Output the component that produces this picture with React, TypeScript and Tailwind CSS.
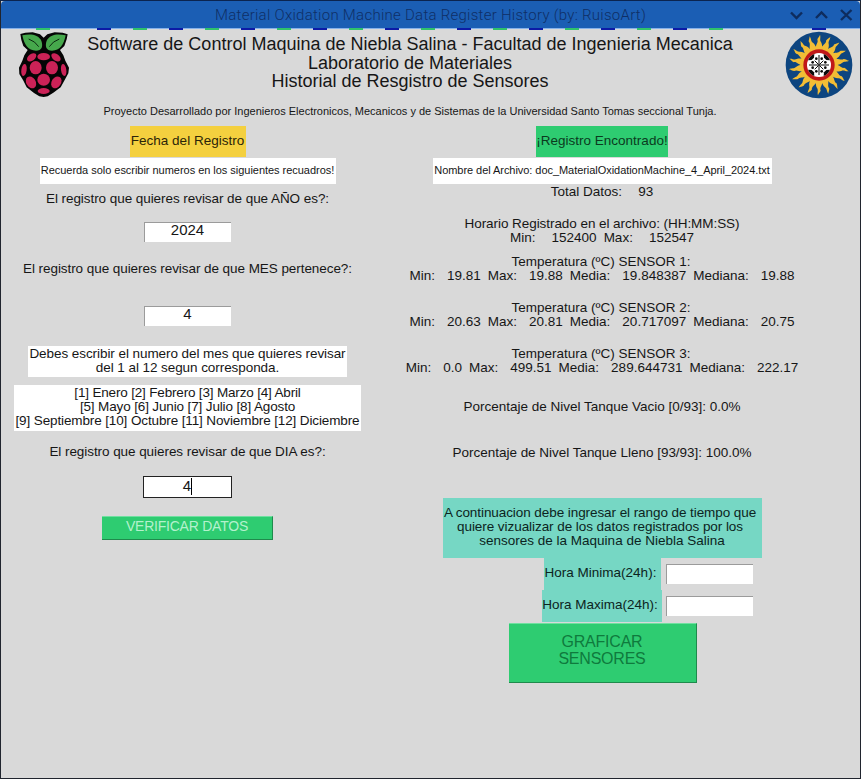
import type { ReactNode } from "react";

const dashes = Array.from({ length: 18 }, (_, i) => i);

function RaspberryLogo() {
  return (
    <svg viewBox="54 96 156 198" className="h-[66px] w-[52px]">
      <path
        d="M61 102 L76 98 L98 97 L120 103 L131 113 L142 103 L164 97 L188 98 L203 103 L200 118 L193 138 L180 150 L190 166 L196 182 L207 203 L205 220 L194 240 L182 262 L160 278 L143 289 L131 291 L118 289 L102 279 L80 262 L69 240 L58 222 L57 203 L67 182 L73 166 L83 150 L70 138 L64 120 Z"
        fill="#050505"
      />
      <g fill="#46a84c">
        <path d="M67 106 C90 100 115 103 124 122 C130 139 125 152 108 152 C84 151 73 135 67 106Z" />
        <path d="M197 106 C174 100 149 103 140 122 C134 139 139 152 156 152 C180 151 191 135 197 106Z" />
      </g>
      <path d="M86 117 Q106 124 116 140 M178 117 Q158 124 148 140" stroke="#0b2a10" strokeWidth="3" fill="none" />
      <g fill="#cb2257">
        <ellipse cx="131" cy="170" rx="19" ry="11" />
        <ellipse cx="95" cy="172" rx="16" ry="10" transform="rotate(-38 95 172)" />
        <ellipse cx="168" cy="172" rx="16" ry="10" transform="rotate(38 168 172)" />
        <ellipse cx="107" cy="203" rx="18" ry="20" />
        <ellipse cx="156" cy="203" rx="18" ry="20" />
        <ellipse cx="72" cy="210" rx="8" ry="18" transform="rotate(8 72 210)" />
        <ellipse cx="191" cy="210" rx="8" ry="18" transform="rotate(-8 191 210)" />
        <ellipse cx="131" cy="239" rx="19" ry="18" />
        <ellipse cx="93" cy="247" rx="14" ry="19" transform="rotate(-32 93 247)" />
        <ellipse cx="169" cy="247" rx="14" ry="19" transform="rotate(32 169 247)" />
        <ellipse cx="131" cy="273" rx="18" ry="9" />
      </g>
    </svg>
  );
}

function UniversitySeal() {
  const rays = Array.from({ length: 18 }, (_, i) => i * 20);
  const quarters = [0, 90, 180, 270];
  return (
    <svg viewBox="-102 -102 204 204" className="h-[68px] w-[68px]">
      <circle r="100" fill="#0d4580" />
      <g fill="#f2bd35">
        <circle r="56" />
        {rays.map((a) => (
          <path key={a} d="M-10 -50 C-10 -62 -1 -68 -5 -76 C-4 -82 2 -86 3 -91 C6 -82 1 -76 6 -69 C10 -62 9 -56 10 -50Z" transform={`rotate(${a})`} />
        ))}
      </g>
      <circle r="47" fill="#c01818" />
      <circle r="36" fill="#fff" />
      <g fill="#0c0c0c">
        {quarters.map((a) => (
          <g key={a} transform={`rotate(${a})`}>
            <path d="M14 -33 A36 36 0 0 1 33 -14 L22 -15 L15 -22 Z" />
            <circle cx="8" cy="-19" r="4" />
            <circle cx="19" cy="-8" r="4" />
            <path d="M-1.5 -30 L1.5 -30 L1.5 0 L-1.5 0 Z" />
            <path d="M2 -2 L13 -13" stroke="#0c0c0c" strokeWidth="3" />
          </g>
        ))}
      </g>
    </svg>
  );
}

function Readings({ items, wide }: { items: [string, string][]; wide?: boolean }) {
  return (
    <div className="flex justify-center gap-[7px]">
      {items.map(([label, value]) => (
        <div key={label} className={wide ? "flex gap-4" : "flex gap-3"}>
          <span>{label}</span>
          <span>{value}</span>
        </div>
      ))}
    </div>
  );
}

function Sensor({ n, items }: { n: number; items: [string, string][] }) {
  return (
    <div className="mb-[18px] h-7">
      <div className="pr-[2px]">Temperatura (ºC) SENSOR {n}:</div>
      <Readings items={items} />
    </div>
  );
}

function Entry({ children }: { children?: ReactNode }) {
  return (
    <div className="h-5 w-[87px] border-t border-l border-[#9b9b9b] bg-white pr-px text-center text-[15px] leading-[13px]">
      {children}
    </div>
  );
}

export default function App() {
  return (
    <div className="flex h-[779px] w-[861px] flex-col overflow-hidden border border-[#20242e] border-t-[#0b2450] bg-[#d9d9d9] font-['Liberation_Sans',Arial,sans-serif] text-[13.5px] leading-[14px] text-[#161616]">
      <div className="flex h-[27px] shrink-0 items-center rounded-t-sm bg-[#1b5eb4]">
        <div className="w-[214px]" />
        <div className="flex-1 whitespace-pre font-[Roboto,sans-serif] text-[15px] leading-[18px] font-light tracking-[0.265px] text-[#0f2f66]">
          Material Oxidation Machine Data Register History (by: RuisoArt)
        </div>
        <svg viewBox="0 0 70 16" className="mr-[4px] h-4 w-[70px]" fill="none" stroke="#0e2c5e" strokeWidth="2.4">
          <path d="M5 5.5 L10.5 11 L16 5.5" />
          <path d="M30 11 L35.5 5.5 L41 11" />
          <path d="M55 3 L65.5 13 M65.5 3 L55 13" />
        </svg>
      </div>
      <div className="flex h-[2px] shrink-0 items-start border-t border-[#86b1ea] pl-[35px]">
        <div className="-mt-px h-[2px] w-[14px] bg-[#2fc26b]" />
        <div className="-mt-px ml-[47px] flex flex-1 gap-[22px]">
          {dashes.map((i) => (
            <div key={i} className={i % 2 ? "h-[2px] w-[14px] bg-[#2fc26b]" : "h-[2px] w-[14px] bg-[#0c1aa6]"} />
          ))}
        </div>
        <div className="-mt-px mr-[34px] h-[2px] w-[14px] bg-[#0c1aa6]" />
      </div>

      <div className="flex h-[96px] shrink-0 pl-[17px]">
        <div className="pt-[2px]">
          <RaspberryLogo />
        </div>
        <div className="ml-[10px] w-[660px] whitespace-pre pt-[5px] text-center text-[18px] leading-[18.5px]">
          <div>Software de Control Maquina de Niebla Salina - Facultad de Ingenieria Mecanica</div>
          <div>Laboratorio de Materiales</div>
          <div>Historial de Resgistro de Sensores</div>
          <div className="mt-[13px] text-[11px] leading-[14px]">
            Proyecto Desarrollado por Ingenieros Electronicos, Mecanicos y de Sistemas de la Universidad Santo Tomas seccional Tunja.
          </div>
        </div>
        <div className="ml-[45px] pt-[1px]">
          <UniversitySeal />
        </div>
      </div>

      <div className="flex flex-1 whitespace-pre text-center">
        <div className="flex w-[373px] flex-col items-center">
          <div className="h-[31px] w-[116px] bg-[#f4d03f] pt-2 text-[#2b2408]">Fecha del Registro</div>
          <div className="mt-[1px] h-[26px] w-[296px] bg-white pt-[5px] text-[11px] tracking-[-0.031px]">
            Recuerda solo escribir numeros en los siguientes recuadros!
          </div>
          <div className="mt-2 h-[14px] tracking-[-0.06px]">El registro que quieres revisar de que AÑO es?:</div>
          <div className="mt-4">
            <Entry>2024</Entry>
          </div>
          <div className="mt-5 h-[14px] tracking-[-0.064px]">El registro que quieres revisar de que MES pertenece?:</div>
          <div className="mt-[30px]">
            <Entry>4</Entry>
          </div>
          <div className="mt-5 h-[31px] w-[319px] bg-white pt-px tracking-[-0.068px]">
            <div>Debes escribir el numero del mes que quieres revisar</div>
            <div>del 1 al 12 segun corresponda.</div>
          </div>
          <div className="mt-2 h-[46px] w-[347px] bg-white pt-px">
            <div className="tracking-[-0.173px]">[1] Enero [2] Febrero [3] Marzo [4] Abril</div>
            <div className="tracking-[-0.138px]">[5] Mayo [6] Junio [7] Julio [8] Agosto</div>
            <div className="tracking-[-0.121px]">[9] Septiembre [10] Octubre [11] Noviembre [12] Diciembre</div>
          </div>
          <div className="mt-[14px] h-[14px] tracking-[-0.062px]">El registro que quieres revisar de que DIA es?:</div>
          <div className="mt-[17px] flex h-[22px] w-[89px] justify-center border border-[#222] bg-white text-[15px] leading-[18px]">
            <span>4</span>
            <span className="mt-px h-[17px] w-px bg-black" />
          </div>
          <div className="mt-[18px] h-6 w-[171px] border-t border-r border-b border-t-[#6fe0a0] border-r-[#1f8a4c] border-b-[#1f8a4c] bg-[#2ecc71] pt-[2px] text-[14px] tracking-[-0.233px] text-[#b4f1cd]">
            VERIFICAR DATOS
          </div>
        </div>

        <div className="flex w-[455px] flex-col items-center pl-[1px]">
          <div className="h-[31px] w-[132px] bg-[#2ecc71] pt-2 text-[#0b3a1e]">¡Registro Encontrado!</div>
          <div className="mt-[1px] h-[26px] w-[339px] bg-white pt-[5px] text-[11px] tracking-[-0.051px]">
            Nombre del Archivo: doc_MaterialOxidationMachine_4_April_2024.txt
          </div>
          <div className="mt-px h-[14px]">
            <Readings wide items={[["Total Datos:", "93"]]} />
          </div>
          <div className="mt-[18px] mb-[10px] h-7">
            <div className="tracking-[-0.059px]">Horario Registrado en el archivo: (HH:MM:SS)</div>
            <Readings wide items={[["Min:", "152400"], ["Max:", "152547"]]} />
          </div>
          <Sensor n={1} items={[["Min:", "19.81"], ["Max:", "19.88"], ["Media:", "19.848387"], ["Mediana:", "19.88"]]} />
          <Sensor n={2} items={[["Min:", "20.63"], ["Max:", "20.81"], ["Media:", "20.717097"], ["Mediana:", "20.75"]]} />
          <Sensor n={3} items={[["Min:", "0.0"], ["Max:", "499.51"], ["Media:", "289.644731"], ["Mediana:", "222.17"]]} />
          <div className="mt-[7px] h-[14px]">Porcentaje de Nivel Tanque Vacio [0/93]: 0.0%</div>
          <div className="mt-8 h-[14px] tracking-[-0.025px]">Porcentaje de Nivel Tanque Lleno [93/93]: 100.0%</div>
          <div className="mt-[38px] h-[60px] w-[319px] bg-[#76d7c4] pt-2 text-[#0c2421]">
            <div className="pr-1 tracking-[-0.073px]">A continuacion debe ingresar el rango de tiempo que</div>
            <div className="pr-1 tracking-[-0.058px]">quiere vizualizar de los datos registrados por los</div>
            <div>sensores de la Maquina de Niebla Salina</div>
          </div>
          <div className="flex w-[300px] text-[#0c2421]">
            <div className="flex w-[210px] shrink-0 flex-col items-end">
              <div className="mr-[1px] h-8 w-[117px] bg-[#76d7c4] pt-2 pr-1">Hora Minima(24h):</div>
              <div className="h-8 w-[120px] bg-[#76d7c4] pt-2 pr-1">Hora Maxima(24h):</div>
            </div>
            <div className="ml-1 flex flex-col gap-3 pt-[6px]">
              <Entry />
              <Entry />
            </div>
          </div>
          <div className="mt-px ml-[1px] h-[60px] w-[188px] border-t border-r border-b border-t-[#6fe0a0] border-r-[#1f8a4c] border-b-[#1f8a4c] bg-[#2ecc71] pt-[10px] text-[16px] leading-[16.5px] tracking-[-0.22px] text-[#0f7a3d]">
            <div>GRAFICAR</div>
            <div>SENSORES</div>
          </div>
        </div>
      </div>
    </div>
  );
}
